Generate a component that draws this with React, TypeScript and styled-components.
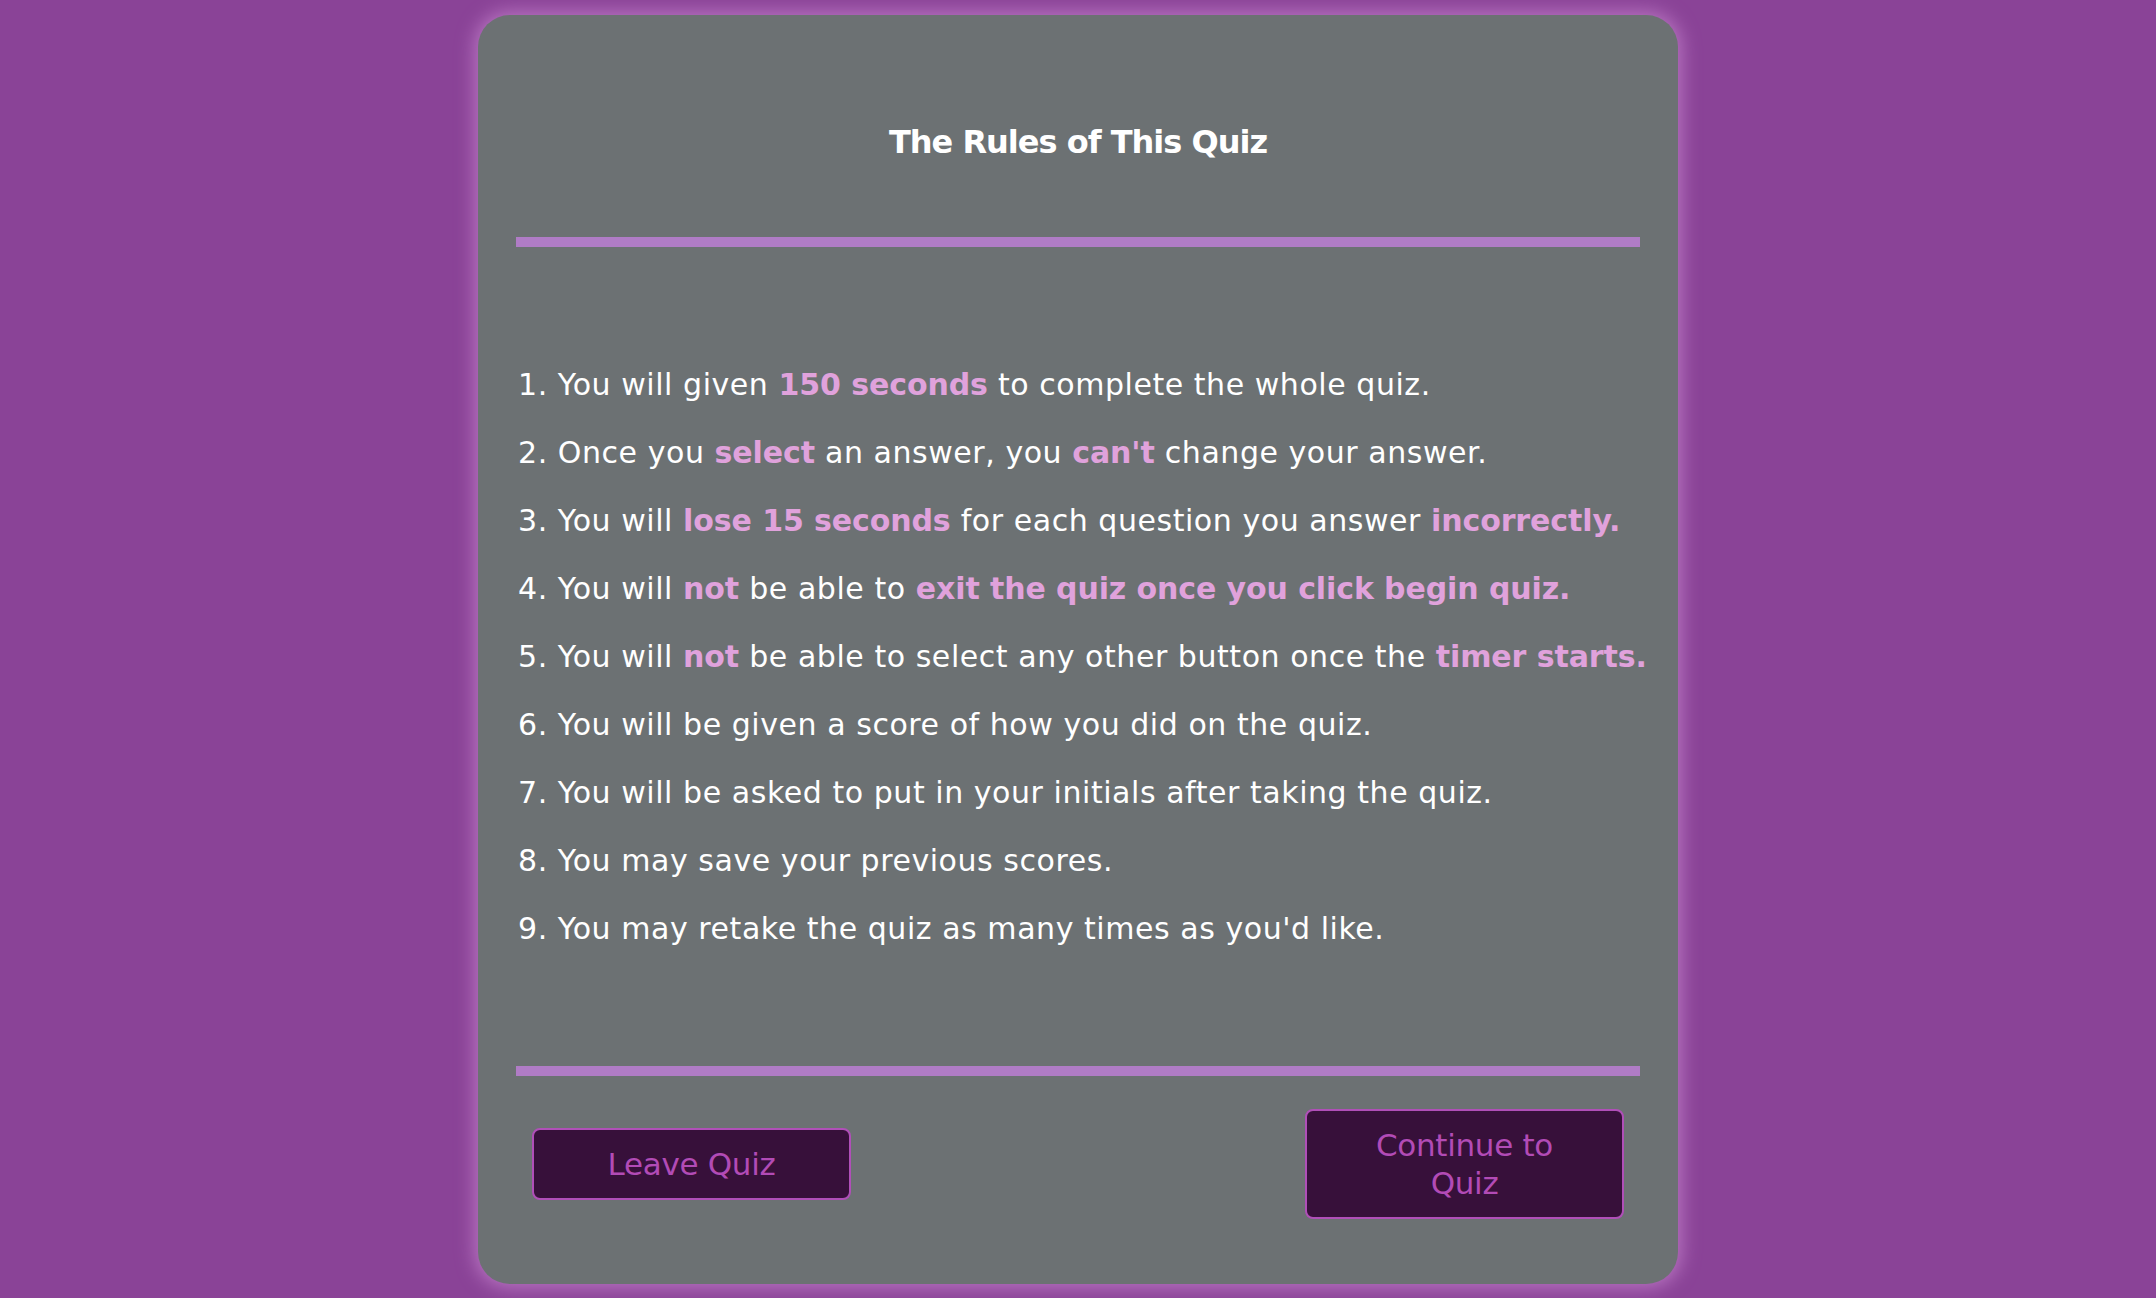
import React from "react";
import styled, { createGlobalStyle } from "styled-components";

const GlobalStyle = createGlobalStyle`
  html, body {
    margin: 0;
    padding: 0;
    background: #8a4397;
  }
  body {
    font-family: "Lucida Grande", "DejaVu Sans", sans-serif;
  }
`;

const Page = styled.div`
  min-height: 100vh;
  display: flex;
  justify-content: center;
  align-items: center;
  background: #8a4397;
`;

const Card = styled.div`
  width: 1200px;
  height: 1269px;
  box-sizing: border-box;
  background: #6c7173;
  border-radius: 32px;
  box-shadow: 0 0 18px 4px #b672bf;
  padding: 107px 38px 0;
  display: flex;
  flex-direction: column;
`;

const Title = styled.h1`
  margin: 0 0 75px;
  font-size: 32px;
  line-height: 40px;
  letter-spacing: -1px;
  font-weight: bold;
  color: #ffffff;
  text-align: center;
`;

const Divider = styled.hr`
  margin: 0;
  border: none;
  height: 10px;
  background: #b07cc6;
`;

const Rules = styled.ol`
  margin: 0;
  padding: 104.6px 0 103.4px 2px;
  list-style: decimal inside;
  color: #ffffff;
  font-size: 30px;
  line-height: 68px;
  letter-spacing: 0.55px;
  white-space: nowrap;
`;

const Hi = styled.strong`
  color: #e0a2dc;
  font-weight: bold;
  letter-spacing: -0.1px;
`;

const Footer = styled.div`
  display: flex;
  justify-content: space-between;
  align-items: center;
  padding: 33px 16px 0;
`;

const Button = styled.button`
  width: 319px;
  box-sizing: border-box;
  padding: 15px 40px;
  background: #37103a;
  border: 2px solid #b04fb8;
  border-radius: 8px;
  color: #b24bb6;
  font-family: "Lucida Grande", "DejaVu Sans", sans-serif;
  font-size: 31px;
  line-height: 38px;
  letter-spacing: -0.3px;
  text-align: center;
  cursor: pointer;
`;

export default function App() {
  return (
    <>
      <GlobalStyle />
      <Page>
        <Card>
          <Title>The Rules of This Quiz</Title>
          <Divider />
          <Rules>
            <li>You will given <Hi>150 seconds</Hi> to complete the whole quiz.</li>
            <li>Once you <Hi>select</Hi> an answer, you <Hi>can't</Hi> change your answer.</li>
            <li>You will <Hi>lose 15 seconds</Hi> for each question you answer <Hi>incorrectly.</Hi></li>
            <li>You will <Hi>not</Hi> be able to <Hi>exit the quiz once you click begin quiz.</Hi></li>
            <li>You will <Hi>not</Hi> be able to select any other button once the <Hi>timer starts.</Hi></li>
            <li>You will be given a score of how you did on the quiz.</li>
            <li>You will be asked to put in your initials after taking the quiz.</li>
            <li>You may save your previous scores.</li>
            <li>You may retake the quiz as many times as you'd like.</li>
          </Rules>
          <Divider />
          <Footer>
            <Button>Leave Quiz</Button>
            <Button>Continue to Quiz</Button>
          </Footer>
        </Card>
      </Page>
    </>
  );
}
